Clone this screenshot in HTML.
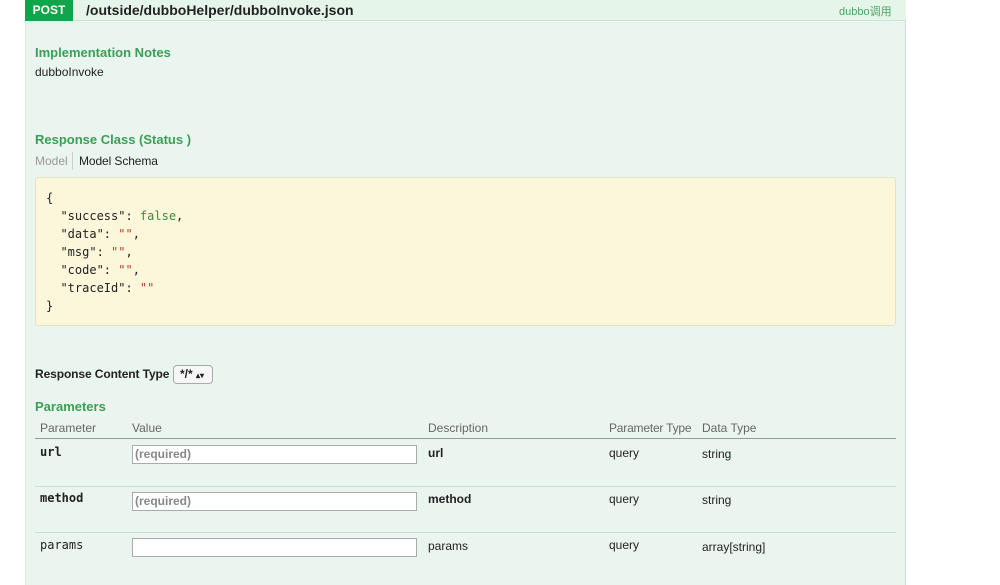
<!DOCTYPE html>
<html><head><meta charset="utf-8"><style>
*{margin:0;padding:0;box-sizing:border-box}
body{width:1000px;height:585px;background:#fff;position:relative;overflow:hidden;font-family:"Liberation Sans","Noto Sans CJK SC",sans-serif;font-size:12px;color:#222}
.a{position:absolute;white-space:nowrap}
.panel{position:absolute;left:25px;top:0;width:881px;height:585px;background:#ebf5f0;border-right:1px solid #c8e3d3;border-left:1px solid #d6eadf}
.hdr{position:absolute;left:25px;top:0;width:881px;height:21px;background:#e6f5ea;border-bottom:1px solid #c5e5cf}
.post{position:absolute;left:25px;top:0;width:48px;height:21px;background:#10a54a;color:#fff;font-weight:bold;font-size:12px;line-height:21px;text-align:center}
.g{color:#3a9f56;font-weight:bold;font-size:13px}
.mono{font-family:"DejaVu Sans Mono","Liberation Mono",monospace}
.box{position:absolute;left:35px;top:177px;width:861px;height:149px;background:#fcf6db;border:1px solid #e8e1c0;border-radius:3px}
pre{position:absolute;left:46px;top:189px;font-family:"DejaVu Sans Mono","Liberation Mono",monospace;font-size:12px;line-height:18px;color:#222}
.s{color:#c0392b}.f{color:#3b8a3b}
.line{position:absolute;left:35px;width:861px;height:1px;background:#cfdcd5}
.inp{position:absolute;left:132px;width:285px;height:19px;background:#fff;border:1px solid #aaa;color:#888;font-weight:bold;font-size:12px;line-height:17px;padding-left:2px}
.h{color:#666}
</style></head><body>
<div class="panel"></div>
<div class="hdr"></div>
<div class="post">POST</div>
<div class="a" style="left:86px;top:2px;font-size:14px;font-weight:bold;color:#222">/outside/dubboHelper/dubboInvoke.json</div>
<div class="a" style="left:839px;top:3px;font-size:11px;color:#4aa463">dubbo调用</div>
<div class="a g" style="left:35px;top:45px">Implementation Notes</div>
<div class="a" style="left:35px;top:65px">dubboInvoke</div>
<div class="a g" style="left:35px;top:132px">Response Class (Status )</div>
<div class="a" style="left:35px;top:154px;color:#999">Model</div>
<div class="a" style="left:72px;top:152px;width:1px;height:18px;background:#ccc"></div>
<div class="a" style="left:79px;top:154px;letter-spacing:-0.1px">Model Schema</div>
<div class="box"></div>
<pre>{
  "success": <span class="f">false</span>,
  "data": <span class="s">""</span>,
  "msg": <span class="s">""</span>,
  "code": <span class="s">""</span>,
  "traceId": <span class="s">""</span>
}</pre>
<div class="a" style="left:35px;top:367px;font-weight:bold;letter-spacing:-0.1px">Response Content Type</div>
<div class="a" style="left:173px;top:365px;width:40px;height:19px;border:1px solid #aaa;border-radius:4px;background:#f6f6f6;font-size:12px;line-height:17px;padding-left:6px;font-weight:bold" >*/* <span style="font-size:8px">&#x25B4;&#x25BE;</span></div>
<div class="a g" style="left:35px;top:399px">Parameters</div>
<div class="a h" style="left:40px;top:421px">Parameter</div>
<div class="a h" style="left:132px;top:421px">Value</div>
<div class="a h" style="left:428px;top:421px">Description</div>
<div class="a h" style="left:609px;top:421px;letter-spacing:-0.2px">Parameter Type</div>
<div class="a h" style="left:702px;top:421px">Data Type</div>
<div class="line" style="top:438px;background:#999"></div>
<div class="line" style="top:486px"></div>
<div class="line" style="top:532px"></div>
<div class="a mono" style="left:40px;top:445px;font-weight:bold">url</div>
<div class="inp" style="top:445px">(required)</div>
<div class="a" style="left:428px;top:446px;font-weight:bold">url</div>
<div class="a" style="left:609px;top:446px">query</div>
<div class="a" style="left:702px;top:447px">string</div>
<div class="a mono" style="left:40px;top:491px;font-weight:bold">method</div>
<div class="inp" style="top:492px">(required)</div>
<div class="a" style="left:428px;top:492px;font-weight:bold">method</div>
<div class="a" style="left:609px;top:492px">query</div>
<div class="a" style="left:702px;top:493px">string</div>
<div class="a mono" style="left:40px;top:538px">params</div>
<div class="inp" style="top:538px"></div>
<div class="a" style="left:428px;top:539px">params</div>
<div class="a" style="left:609px;top:538px">query</div>
<div class="a" style="left:702px;top:540px">array[string]</div>
</body></html>
